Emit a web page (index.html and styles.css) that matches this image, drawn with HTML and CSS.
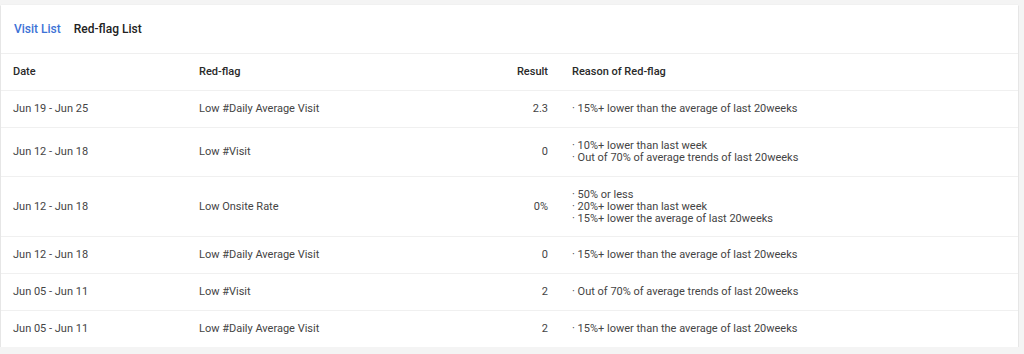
FILE: index.html
```html
<!DOCTYPE html>
<html>
<head>
<meta charset="utf-8">
<link rel="stylesheet" href="styles.css">
</head>
<body>
<div class="card">
  <div class="tabs">
    <span class="tab active">Visit List</span>
    <span class="tab">Red-flag List</span>
  </div>
  <div class="row head">
    <div class="c date">Date</div>
    <div class="c flag">Red-flag</div>
    <div class="c result">Result</div>
    <div class="c reason">Reason of Red-flag</div>
  </div>
  <div class="row">
    <div class="c date">Jun 19 - Jun 25</div>
    <div class="c flag">Low #Daily Average Visit</div>
    <div class="c result">2.3</div>
    <div class="c reason"><div>· 15%+ lower than the average of last 20weeks</div></div>
  </div>
  <div class="row">
    <div class="c date">Jun 12 - Jun 18</div>
    <div class="c flag">Low #Visit</div>
    <div class="c result">0</div>
    <div class="c reason"><div>· 10%+ lower than last week</div><div>· Out of 70% of average trends of last 20weeks</div></div>
  </div>
  <div class="row tall">
    <div class="c date">Jun 12 - Jun 18</div>
    <div class="c flag">Low Onsite Rate</div>
    <div class="c result">0%</div>
    <div class="c reason"><div>· 50% or less</div><div>· 20%+ lower than last week</div><div>· 15%+ lower the average of last 20weeks</div></div>
  </div>
  <div class="row">
    <div class="c date">Jun 12 - Jun 18</div>
    <div class="c flag">Low #Daily Average Visit</div>
    <div class="c result">0</div>
    <div class="c reason"><div>· 15%+ lower than the average of last 20weeks</div></div>
  </div>
  <div class="row">
    <div class="c date">Jun 05 - Jun 11</div>
    <div class="c flag">Low #Visit</div>
    <div class="c result">2</div>
    <div class="c reason"><div>· Out of 70% of average trends of last 20weeks</div></div>
  </div>
  <div class="row last">
    <div class="c date">Jun 05 - Jun 11</div>
    <div class="c flag">Low #Daily Average Visit</div>
    <div class="c result">2</div>
    <div class="c reason"><div>· 15%+ lower than the average of last 20weeks</div></div>
  </div>
</div>
</body>
</html>
```

FILE: styles.css
```css
html, body {
  margin: 0;
  padding: 0;
  background: #f4f4f4;
}
body {
  padding: 5px 6px 0 1px;
  font-family: Roboto, "Liberation Sans", sans-serif;
  color: #444;
}
.card {
  background: #fff;
  box-shadow: 0 1px 1px rgba(0,0,0,0.25), 0 0 1px rgba(0,0,0,0.08);
}
.tabs {
  height: 49px;
  box-sizing: border-box;
  display: flex;
  align-items: center;
  gap: 13px;
  padding: 0 13px;
  border-bottom: 1px solid #efefef;
}
.tab {
  font-size: 12px;
  font-weight: 500;
  color: #222;
}
.tab.active {
  color: #3d72d6;
}
.row {
  display: flex;
  align-items: center;
  padding: 12px 0 12px 12px;
  border-bottom: 1px solid #f0f0f0;
  font-size: 11px;
  line-height: 12px;
}
.row.tall {
  padding-bottom: 11px;
}
.row.head {
  font-weight: 500;
  color: #2a2a2a;
}
.row.last {
  border-bottom: none;
}
.c.date { width: 186px; flex: none; }
.c.flag { width: 273px; flex: none; }
.c.result { width: 76px; flex: none; text-align: right; }
.c.reason { margin-left: 24px; }
```
